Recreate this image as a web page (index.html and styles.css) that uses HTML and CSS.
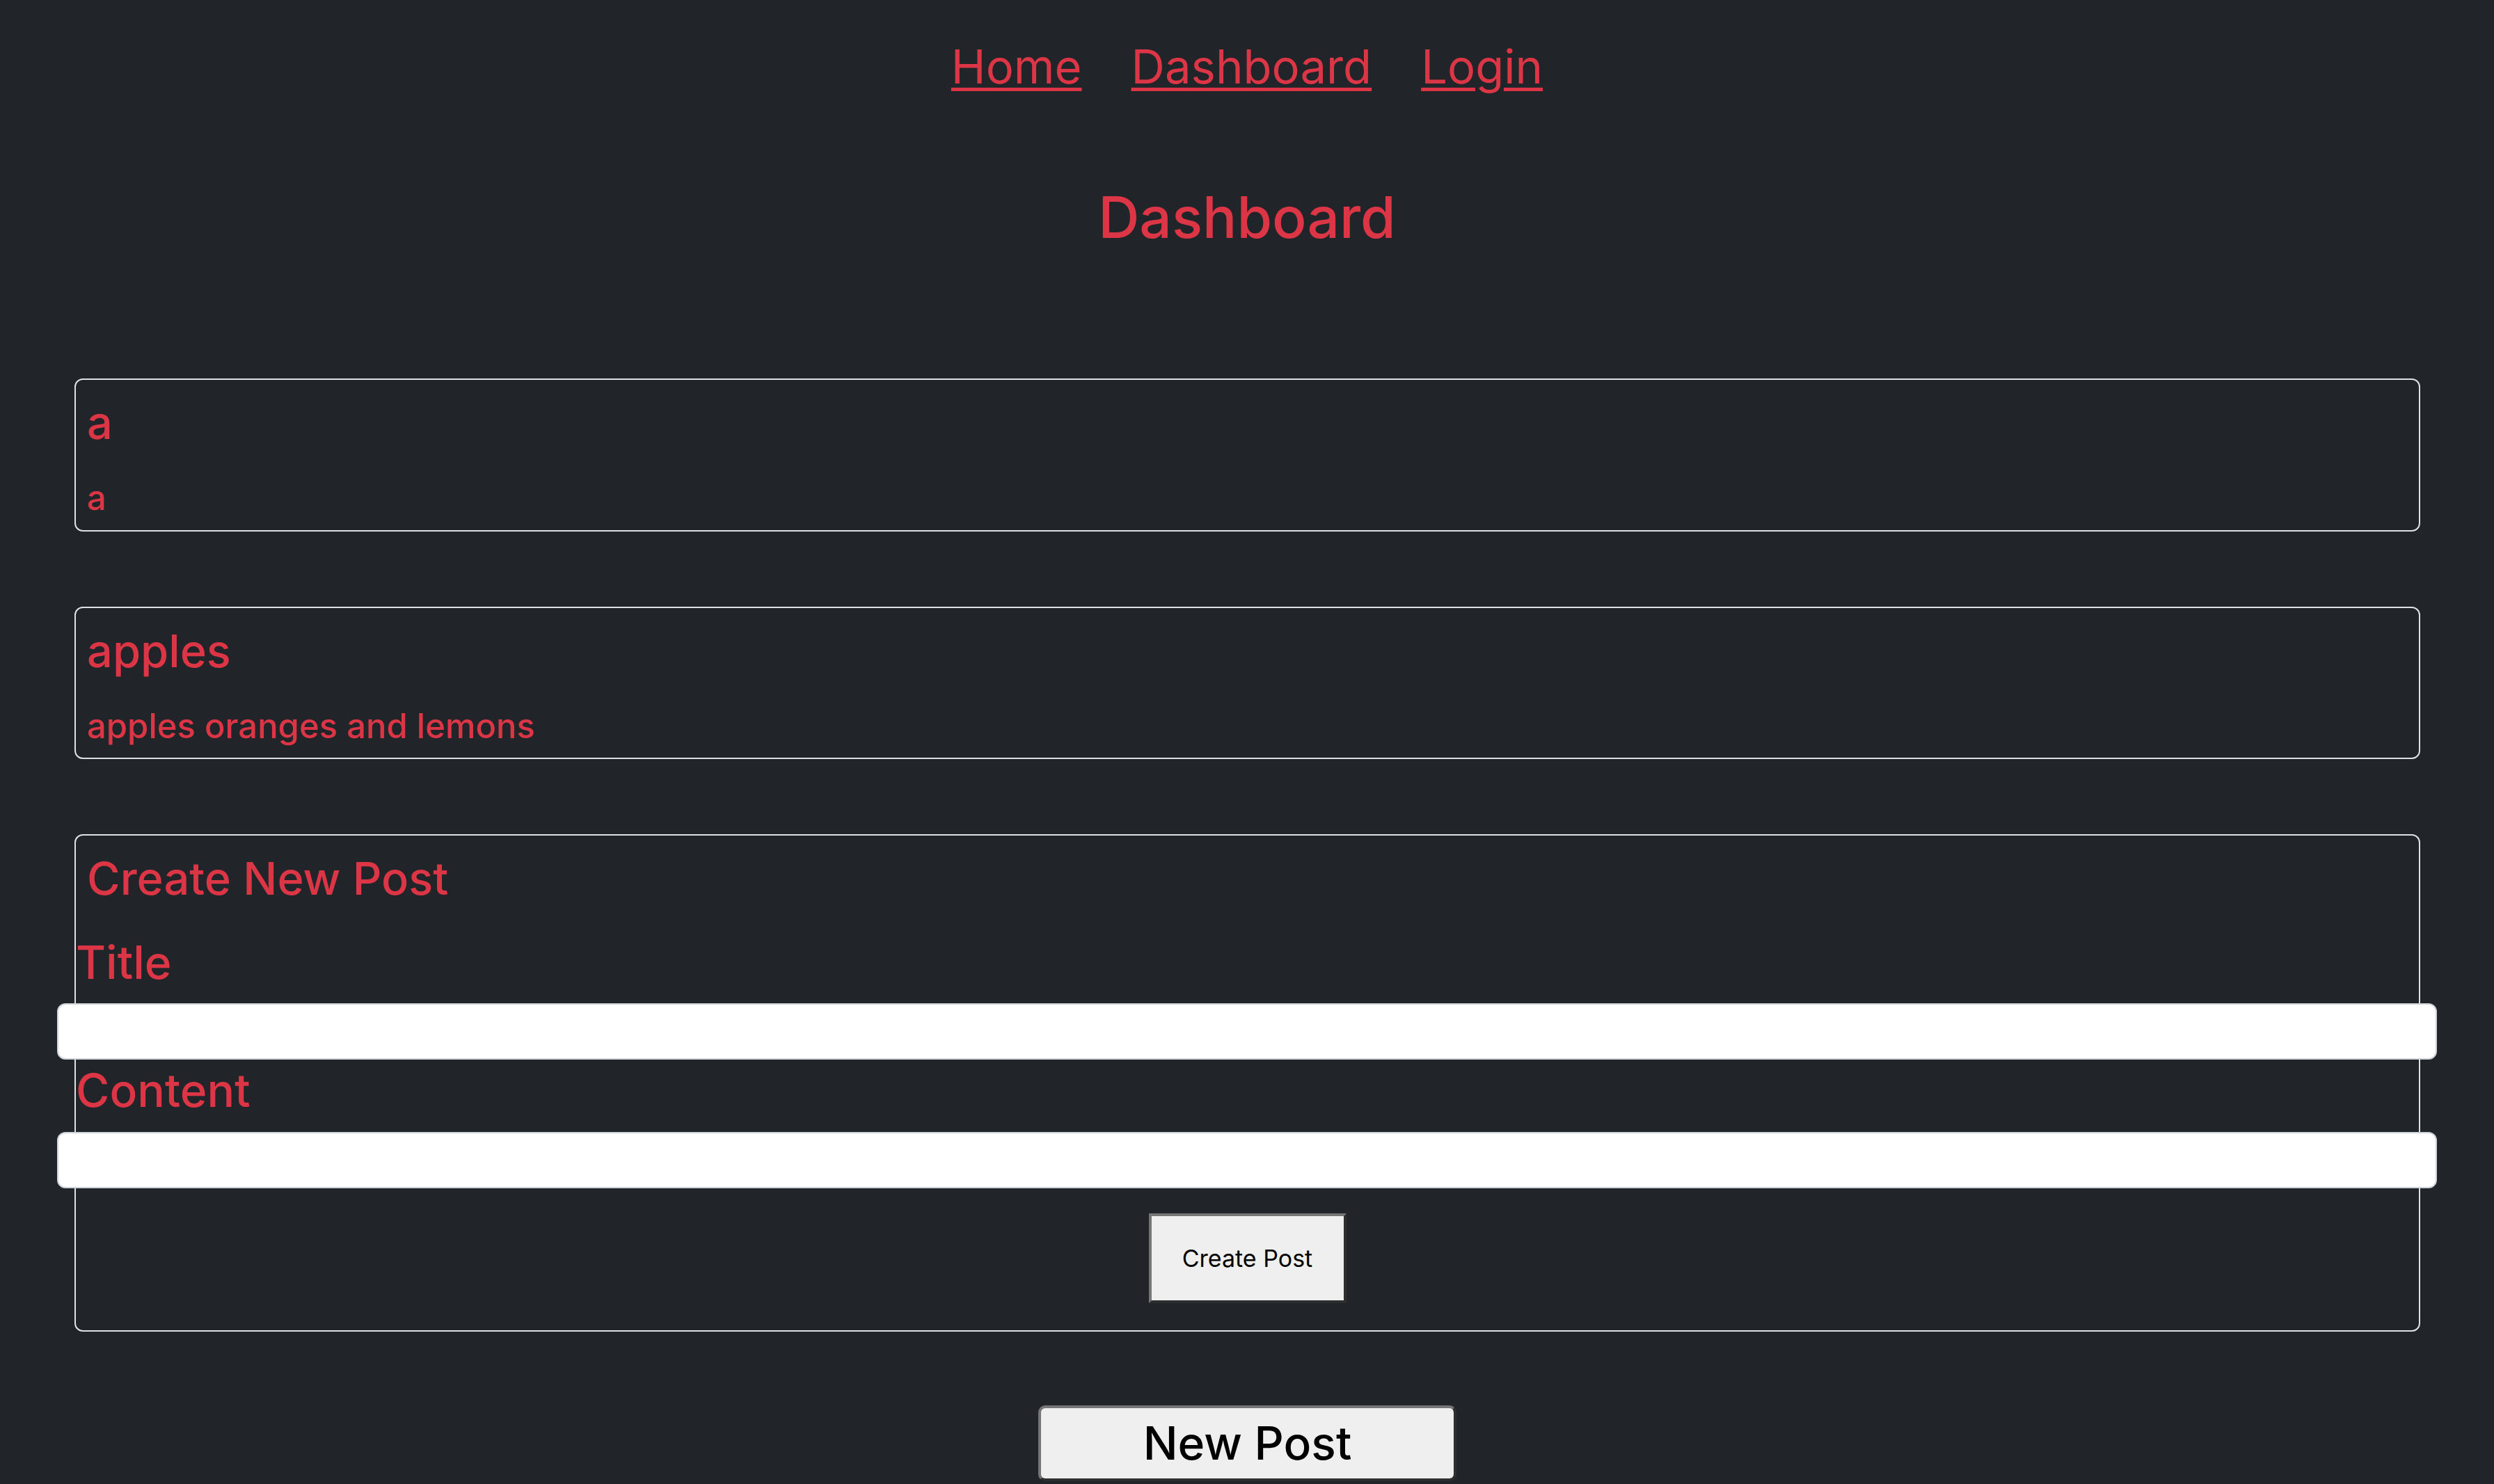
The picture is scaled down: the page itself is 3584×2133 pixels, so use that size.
FILE: index.html
```html
<!DOCTYPE html>
<html lang="en">
<head>
<meta charset="utf-8">
<title>Dashboard</title>
<link rel="stylesheet" href="styles.css">
</head>
<body>
<nav class="nav">
  <a class="nav-link" href="#">Home</a>
  <a class="nav-link" href="#">Dashboard</a>
  <a class="nav-link" href="#">Login</a>
</nav>
<h1 class="page-title">Dashboard</h1>
<main class="posts">
  <article class="card post">
    <h3 class="card-title">a</h3>
    <p class="card-text">a</p>
  </article>
  <article class="card post">
    <h3 class="card-title">apples</h3>
    <p class="card-text">apples oranges and lemons</p>
  </article>
  <section class="card create">
    <h3 class="card-title create-title">Create New Post</h3>
    <form class="post-form">
      <label class="field-label first" for="title">Title</label>
      <input class="field-input" id="title" type="text">
      <label class="field-label" for="content">Content</label>
      <input class="field-input" id="content" type="text">
      <div class="form-actions">
        <button class="btn btn-create" type="button">Create Post</button>
      </div>
    </form>
  </section>
  <div class="new-post-row">
    <button class="btn btn-new" type="button">New Post</button>
  </div>
</main>
</body>
</html>
```

FILE: styles.css
```css
html, body {
  margin: 0;
  padding: 0;
}
body {
  background: #212529;
  color: #dc3545;
  font-family: Inter, "Noto Sans", sans-serif;
  line-height: 1.2;
  overflow: hidden;
}
.nav {
  display: flex;
  justify-content: center;
  gap: 71px;
  padding-top: 56px;
  font-size: 67px;
  line-height: 1.2;
}
.nav-link {
  color: #dc3545;
  text-decoration: underline;
  text-decoration-thickness: 5px;
  text-underline-offset: 6px;
}
.page-title {
  margin: 128px 0 0;
  text-align: center;
  font-size: 82px;
  font-weight: 500;
  line-height: 1.2;
}
.posts {
  display: flex;
  flex-direction: column;
  gap: 108px;
  margin-top: 181px;
  padding: 0 106px 0 107px;
}
.card {
  border: 2px solid #dee2e6;
  border-radius: 12px;
  background: #212529;
}
.post {
  padding: 23px 16px 16px;
}
.card-title {
  margin: 0;
  font-size: 65px;
  font-weight: 500;
  line-height: 1.2;
}
.card-text {
  margin: 40px 0 0;
  font-size: 49px;
  font-weight: 500;
  line-height: 1.2;
}
.create {
  padding: 23px 0 39px;
}
.create-title {
  padding: 0 16px;
}
.post-form {
  display: flex;
  flex-direction: column;
}
.field-label {
  display: block;
  font-size: 66px;
  font-weight: 500;
  line-height: 1.2;
  margin: 5px 0 20px;
}
.field-label.first {
  margin: 42px 0 18px;
}
.field-input {
  box-sizing: border-box;
  display: block;
  width: calc(100% + 53px);
  height: 81px;
  margin: 0 -26px 0 -27px;
  border: 2px solid #ced4da;
  border-radius: 12px;
  background: #fff;
}
.form-actions {
  display: flex;
  justify-content: center;
  margin-top: 36px;
}
.btn {
  box-sizing: border-box;
  background: #efefef;
  color: #000;
  font-family: Inter, "Noto Sans", sans-serif;
  border-width: 4px;
  border-style: solid;
  border-color: #767676 #2e2e2e #2e2e2e #767676;
  padding: 0;
}
.btn-create {
  width: 284px;
  height: 129px;
  font-size: 34px;
  border-radius: 0;
}
.new-post-row {
  display: flex;
  justify-content: center;
  margin-top: -2px;
}
.btn-new {
  width: 601px;
  height: 109px;
  font-size: 66px;
  font-weight: 500;
  border-radius: 10px;
}
```
